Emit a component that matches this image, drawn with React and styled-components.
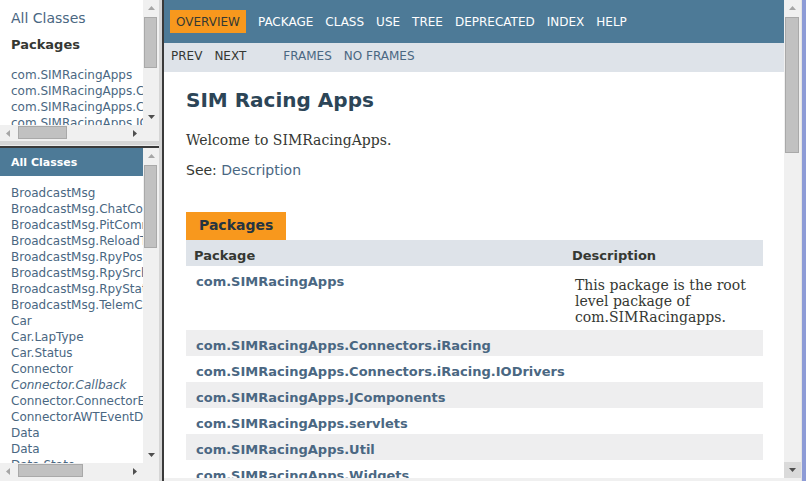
import React from 'react'
import styled, { createGlobalStyle } from 'styled-components'

const GlobalStyle = createGlobalStyle`
  html, body {
    margin: 0;
    padding: 0;
    overflow: hidden;
    background: #f0f0f0;
  }
  body {
    font-family: 'DejaVu Sans', Arial, sans-serif;
  }
`

const Window = styled.div`
  display: flex;
  width: 806px;
  height: 481px;
  overflow: hidden;
  background: #f0f0f0;
`

const LeftColumn = styled.div`
  display: flex;
  flex-direction: column;
  width: 159px;
  flex-shrink: 0;
`

const Frame = styled.div`
  display: flex;
  flex-direction: column;
  background: #fff;
  height: ${p => p.$height}px;
  flex-shrink: 0;
  min-height: 0;
`

const FrameBody = styled.div`
  display: flex;
  flex: 1;
  min-height: 0;
`

const Pane = styled.div`
  flex: 1;
  min-width: 0;
  overflow: hidden;
  white-space: nowrap;
  background: #fff;
`

const HDivider = styled.div`
  height: 1px;
  border-top: 4px solid #d6d6d6;
  border-bottom: 2px solid #3a3a3a;
  background: #ececec;
  flex-shrink: 0;
`

const VDivider = styled.div`
  width: 2px;
  border-left: 3px solid #d6d6d6;
  background: #3a3a3a;
  flex-shrink: 0;
`

const BottomStrip = styled.div`
  height: ${p => p.$h}px;
  background: #f0f0f0;
  flex-shrink: 0;
`

const WindowEdge = styled.div`
  width: 4px;
  border-left: 1px solid #e4e4e4;
  background: #8d9bd6;
  flex-shrink: 0;
`

/* scrollbars */
const VBar = styled.div`
  width: ${p => p.$w || 16}px;
  flex-shrink: 0;
  display: flex;
  flex-direction: column;
  background: #f0f0f0;
`

const ArrowBox = styled.div`
  flex-shrink: 0;
  width: ${p => (p.$horizontal ? '16px' : '100%')};
  height: ${p => (p.$horizontal ? '100%' : '16px')};
  display: flex;
  align-items: center;
  justify-content: center;
  background: ${p => (p.$pressed ? '#dadada' : 'transparent')};
`

const Rail = styled.div`
  flex: 1;
  min-height: 0;
  min-width: 0;
  display: flex;
  flex-direction: ${p => (p.$horizontal ? 'row' : 'column')};
`

const VThumb = styled.div`
  flex-shrink: 0;
  margin: ${p => p.$offset}px 2px 0 1px;
  height: ${p => p.$size}px;
  background: #c1c1c1;
  border: 1px solid #a9a9a9;
  box-sizing: border-box;
`

const HBar = styled.div`
  height: 16px;
  flex-shrink: 0;
  display: flex;
  background: #f0f0f0;
`

const HThumb = styled.div`
  flex-shrink: 0;
  margin: 1px 0 2px ${p => p.$offset}px;
  width: ${p => p.$size}px;
  background: #c1c1c1;
  border: 1px solid #a9a9a9;
  box-sizing: border-box;
`

const Corner = styled.div`
  width: 16px;
  flex-shrink: 0;
  background: #f0f0f0;
`

const Tri = ({ dir, on }) => {
  const pts = {
    up: '0,4 7,4 3.5,0',
    down: '0,0 7,0 3.5,4',
    left: '4,0 4,7 0,3.5',
    right: '0,0 0,7 4,3.5',
  }[dir]
  const wide = dir === 'up' || dir === 'down'
  return (
    <svg width={wide ? 7 : 4} height={wide ? 4 : 7} viewBox={wide ? '0 0 7 4' : '0 0 4 7'}>
      <polygon points={pts} fill={on ? '#4f4f4f' : '#a6a6a6'} />
    </svg>
  )
}

const VScroll = ({ offset, size, w, pressed }) => (
  <VBar $w={w}>
    <ArrowBox><Tri dir="up" /></ArrowBox>
    <Rail>
      <VThumb $offset={offset} $size={size} />
    </Rail>
    <ArrowBox $pressed={pressed}><Tri dir="down" on /></ArrowBox>
  </VBar>
)

const HScroll = ({ offset, size }) => (
  <HBar>
    <ArrowBox $horizontal><Tri dir="left" /></ArrowBox>
    <Rail $horizontal>
      <HThumb $offset={offset} $size={size} />
    </Rail>
    <ArrowBox $horizontal><Tri dir="right" on /></ArrowBox>
    <Corner />
  </HBar>
)

/* left frames */
const IndexLink = styled.div`
  padding: 10px 0 0 11px;
  font-size: 14px;
  line-height: 16px;
  color: #4a6782;
`

const PaneHeading = styled.div`
  margin: 11px 0 0 11px;
  font-size: 13px;
  font-weight: bold;
  line-height: 16px;
  color: #353833;
`

const LinkList = styled.ul`
  list-style: none;
  margin: ${p => p.$top}px 0 0;
  padding: 0 0 0 11px;
`

const LinkItem = styled.li`
  font-size: 12px;
  line-height: 16px;
  color: #4a6782;
  font-style: ${p => (p.$italic ? 'italic' : 'normal')};
`

const ClassesBar = styled.div`
  height: 28px;
  box-sizing: border-box;
  background: #4d7a97;
  color: #fff;
  font-size: 11px;
  font-weight: bold;
  line-height: 26px;
  padding: 2px 0 0 11px;
`

/* right frame */
const RightFrame = styled.div`
  flex: 1;
  min-width: 0;
  display: flex;
  flex-direction: column;
`

const TopNav = styled.div`
  height: 43px;
  box-sizing: border-box;
  background: #4d7a97;
  padding: 10px 0 0 6px;
  display: flex;
  align-items: flex-start;
`

const NavItem = styled.span`
  padding: 5px 6px 4px;
  margin-right: ${p => (p.$active ? '6px' : '0')};
  font-size: 12px;
  line-height: 14px;
  color: ${p => (p.$active ? '#353833' : '#fff')};
  background: ${p => (p.$active ? '#f8981d' : 'transparent')};
`

const SubNav = styled.div`
  height: 29px;
  box-sizing: border-box;
  background: #dee3e9;
  padding: 6px 0 0 7px;
  display: flex;
  gap: 12px;
  font-size: 12px;
  line-height: 14px;
`

const SubGroup = styled.div`
  display: flex;
  gap: 12px;
  margin-left: ${p => p.$gap || 0}px;
`

const SubItem = styled.span`
  color: ${p => (p.$link ? '#4a6782' : '#353833')};
`

const Content = styled.div`
  padding: 0 21px 0 22px;
`

const Title = styled.h1`
  margin: 16px 0 0;
  font-size: 20px;
  line-height: 24px;
  font-weight: bold;
  color: #2c4557;
`

const Lead = styled.p`
  margin: 20px 0 0;
  font-family: 'DejaVu Serif', 'Liberation Serif', serif;
  font-size: 14px;
  line-height: 16px;
  color: #353833;
`

const SeeLine = styled.p`
  margin: 14px 0 0;
  font-size: 14px;
  line-height: 16px;
  color: #353833;

  span {
    color: #4a6782;
  }
`

const Caption = styled.div`
  display: inline-block;
  margin-top: 34px;
  padding: 5px 13px 7px;
  background: #f8981d;
  font-size: 14px;
  font-weight: bold;
  line-height: 16px;
  color: #253441;
`

const Table = styled.div`
  display: flex;
  flex-direction: column;
`

const Row = styled.div`
  display: flex;
  background: ${p => (p.$head ? '#dee3e9' : p.$shade ? '#eeeeef' : '#fff')};
`

const HeadCell = styled.div`
  box-sizing: border-box;
  width: ${p => (p.$first ? '378px' : 'auto')};
  flex: ${p => (p.$first ? 'none' : 1)};
  padding: 8px 8px 2px;
  font-size: 13px;
  font-weight: bold;
  line-height: 16px;
  color: #353833;
`

const PkgCell = styled.div`
  box-sizing: border-box;
  width: 378px;
  flex-shrink: 0;
  padding: 8px 10px 2px;
  font-size: 13px;
  font-weight: bold;
  line-height: 16px;
  color: #4a6782;
  white-space: nowrap;
`

const DescCell = styled.div`
  flex: 1;
  padding: 11px 6px 5px 11px;
  font-family: 'DejaVu Serif', 'Liberation Serif', serif;
  font-size: 14px;
  line-height: 16px;
  color: #353833;
  white-space: normal;
`

const packages = [
  'com.SIMRacingApps',
  'com.SIMRacingApps.Connectors.iRacing',
  'com.SIMRacingApps.Connectors.iRacing.IODrivers',
  'com.SIMRacingApps.JComponents',
  'com.SIMRacingApps.servlets',
  'com.SIMRacingApps.Util',
  'com.SIMRacingApps.Widgets',
]

const classes = [
  ['BroadcastMsg'],
  ['BroadcastMsg.ChatCommand'],
  ['BroadcastMsg.PitCommand'],
  ['BroadcastMsg.ReloadTextures'],
  ['BroadcastMsg.RpyPosMode'],
  ['BroadcastMsg.RpySrchMode'],
  ['BroadcastMsg.RpyStateMode'],
  ['BroadcastMsg.TelemCommand'],
  ['Car'],
  ['Car.LapType'],
  ['Car.Status'],
  ['Connector'],
  ['Connector.Callback', true],
  ['Connector.ConnectorException'],
  ['ConnectorAWTEventDispatcher'],
  ['Data'],
  ['Data'],
  ['Data.State'],
  ['DataPublisher'],
]

const navItems = ['PACKAGE', 'CLASS', 'USE', 'TREE', 'DEPRECATED', 'INDEX', 'HELP']

export default function App() {
  return (
    <>
      <GlobalStyle />
      <Window>
        <LeftColumn>
          <Frame $height={141}>
            <FrameBody>
              <Pane>
                <IndexLink>All Classes</IndexLink>
                <PaneHeading>Packages</PaneHeading>
                <LinkList $top={14}>
                  {packages.slice(0, 4).map(p => (
                    <LinkItem key={p}>{p}</LinkItem>
                  ))}
                </LinkList>
              </Pane>
              <VScroll offset={1} size={51} />
            </FrameBody>
            <HScroll offset={2} size={49} />
          </Frame>
          <HDivider />
          <Frame $height={331}>
            <FrameBody>
              <Pane>
                <ClassesBar>All Classes</ClassesBar>
                <LinkList $top={9}>
                  {classes.map(([name, italic], i) => (
                    <LinkItem key={i} $italic={italic}>{name}</LinkItem>
                  ))}
                </LinkList>
              </Pane>
              <VScroll offset={1} size={83} />
            </FrameBody>
            <HScroll offset={2} size={65} />
          </Frame>
          <BottomStrip $h={2} />
        </LeftColumn>
        <VDivider />
        <RightFrame>
          <Frame $height={478}>
            <FrameBody>
              <Pane>
                <TopNav>
                  <NavItem $active>OVERVIEW</NavItem>
                  {navItems.map(n => (
                    <NavItem key={n}>{n}</NavItem>
                  ))}
                </TopNav>
                <SubNav>
                  <SubGroup>
                    <SubItem>PREV</SubItem>
                    <SubItem>NEXT</SubItem>
                  </SubGroup>
                  <SubGroup $gap={25}>
                    <SubItem $link>FRAMES</SubItem>
                    <SubItem $link>NO FRAMES</SubItem>
                  </SubGroup>
                </SubNav>
                <Content>
                  <Title>SIM Racing Apps</Title>
                  <Lead>Welcome to SIMRacingApps.</Lead>
                  <SeeLine>See: <span>Description</span></SeeLine>
                  <Caption>Packages</Caption>
                  <Table>
                    <Row $head>
                      <HeadCell $first>Package</HeadCell>
                      <HeadCell>Description</HeadCell>
                    </Row>
                    {packages.map((p, i) => (
                      <Row key={p} $shade={i % 2 === 1}>
                        <PkgCell>{p}</PkgCell>
                        <DescCell>
                          {i === 0 ? 'This package is the root level package of com.SIMRacingapps.' : null}
                        </DescCell>
                      </Row>
                    ))}
                  </Table>
                </Content>
              </Pane>
              <VScroll offset={1} size={136} w={17} pressed />
            </FrameBody>
          </Frame>
          <BottomStrip $h={3} />
        </RightFrame>
        <WindowEdge />
      </Window>
    </>
  )
}
